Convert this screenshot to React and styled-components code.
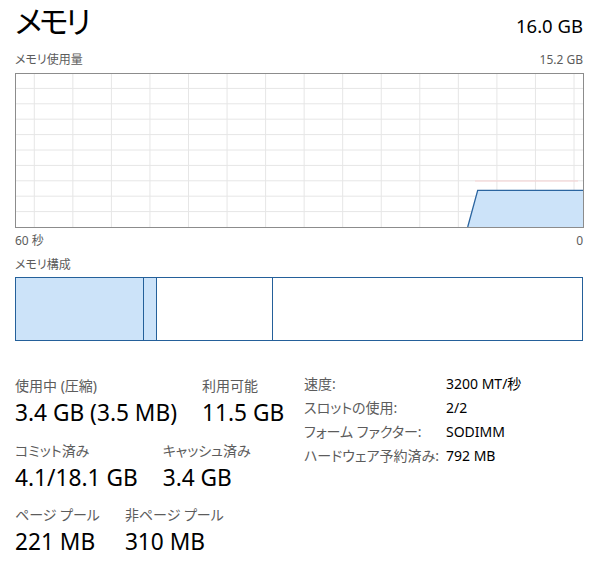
import React from 'react';
import styled, { createGlobalStyle } from 'styled-components';

const GlobalStyle = createGlobalStyle`
  html, body {
    margin: 0;
    padding: 0;
    background: #ffffff;
  }
  body {
    font-family: "Noto Sans", "Noto Sans CJK JP", sans-serif;
    font-feature-settings: "palt";
    color: #000;
  }
`;

const Page = styled.div`
  box-sizing: border-box;
  width: 606px;
  height: 577px;
  padding: 0 23px 0 15px;
  display: flex;
  flex-direction: column;
`;

const Header = styled.div`
  display: flex;
  justify-content: space-between;
  align-items: flex-end;
  height: 40px;
`;

const Title = styled.h1`
  margin: 0 0 -1px;
  font-size: 31px;
  font-weight: 400;
  line-height: 40px;
  letter-spacing: -3px;
`;

const Total = styled.div`
  font-size: 18.5px;
  line-height: 24px;
  margin-bottom: 2px;
`;

const CaptionRow = styled.div`
  display: flex;
  justify-content: space-between;
  font-size: 12px;
  line-height: 16px;
  color: #5c5c5c;
  margin-top: ${({ top }) => top || 0}px;
`;

const Chart = styled.svg`
  display: block;
  margin-top: ${({ top }) => top || 0}px;
`;

// memory composition bar: in use / modified / standby / free
const CompBar = styled.div`
  display: flex;
  height: 64px;
  margin-top: 4px;
  border: 1.5px solid #24609a;
  box-sizing: border-box;
`;

const Segment = styled.div`
  flex: ${({ w }) => (w ? `0 0 ${w}px` : '1')};
  background: ${({ filled }) => (filled ? '#cce3f9' : '#fff')};
  border-right: ${({ last }) => (last ? 'none' : '1.5px solid #24609a')};
`;

const Stats = styled.div`
  display: flex;
  margin-top: 35px;
`;

const LeftStats = styled.div`
  display: flex;
  flex-direction: column;
  gap: 10.5px;
  width: 289px;
`;

const StatRow = styled.div`
  display: flex;
  gap: 25px;
`;

const Stat = styled.div`
  display: flex;
  flex-direction: column;
`;

const StatLabel = styled.div`
  font-size: 14px;
  line-height: 20px;
  color: #5c5c5c;
`;

const StatValue = styled.div`
  font-size: 22.7px;
  line-height: 34px;
  color: #000;
`;

const Details = styled.div`
  display: grid;
  grid-template-columns: 142px auto;
  grid-auto-rows: 24px;
  margin-top: -5px;
  font-size: 14px;
  align-items: center;
`;

const DetailLabel = styled.div`
  color: #5c5c5c;
`;

const DetailValue = styled.div`
  color: #000;
`;

const W = 568;
const H = 154;

const UsageChart = () => {
  const cols = [];
  for (let x = 19.3; x < W; x += 38.55) cols.push(x);
  const rows = [];
  for (let i = 1; i < 10; i++) rows.push(i * 15.4);
  return (
    <Chart width={W + 1} height={H + 1} top={5} viewBox={`0 0 ${W + 1} ${H + 1}`}>
      {cols.map((x) => (
        <line key={`c${x}`} x1={x} x2={x} y1={0} y2={H} stroke="#e6e6e6" strokeWidth="1" />
      ))}
      {rows.map((y) => (
        <line key={`r${y}`} x1={0} x2={W} y1={y} y2={y} stroke="#e6e6e6" strokeWidth="1" />
      ))}
      <line x1={460} x2={563} y1={108} y2={108} stroke="#f6d2d2" strokeWidth="1" />
      <polygon points={`452.7,${H} 462.7,117.3 ${W},117.3 ${W},${H}`} fill="#cce3f9" />
      <polyline points={`452.7,${H} 462.7,117.3 ${W},117.3`} fill="none" stroke="#2b65a0" strokeWidth="1.3" />
      <rect x="0.5" y="0.5" width={W} height={H} fill="none" stroke="#8c8c8c" strokeWidth="1" />
    </Chart>
  );
};

const details = [
  ['速度:', '3200 MT/秒'],
  ['スロットの使用:', '2/2'],
  ['フォーム ファクター:', 'SODIMM'],
  ['ハードウェア予約済み:', '792 MB'],
];

const statRows = [
  [['使用中 (圧縮)', '3.4 GB (3.5 MB)'], ['利用可能', '11.5 GB']],
  [['コミット済み', '4.1/18.1 GB'], ['キャッシュ済み', '3.4 GB']],
  [['ページ プール', '221 MB'], ['非ページ プール', '310 MB']],
];

export default function App() {
  return (
    <>
      <GlobalStyle />
      <Page>
        <Header>
          <Title>メモリ</Title>
          <Total>16.0 GB</Total>
        </Header>
        <CaptionRow top={12}>
          <span>メモリ使用量</span>
          <span>15.2 GB</span>
        </CaptionRow>
        <UsageChart />
        <CaptionRow top={5}>
          <span>60 秒</span>
          <span>0</span>
        </CaptionRow>
        <CaptionRow top={8}>
          <span>メモリ構成</span>
        </CaptionRow>
        <CompBar>
          <Segment w={127} filled />
          <Segment w={12} filled />
          <Segment w={115} />
          <Segment last />
        </CompBar>
        <Stats>
          <LeftStats>
            {statRows.map((row, i) => (
              <StatRow key={i}>
                {row.map(([label, value]) => (
                  <Stat key={label}>
                    <StatLabel>{label}</StatLabel>
                    <StatValue>{value}</StatValue>
                  </Stat>
                ))}
              </StatRow>
            ))}
          </LeftStats>
          <Details>
            {details.map(([label, value]) => (
              <React.Fragment key={label}>
                <DetailLabel>{label}</DetailLabel>
                <DetailValue>{value}</DetailValue>
              </React.Fragment>
            ))}
          </Details>
        </Stats>
      </Page>
    </>
  );
}
